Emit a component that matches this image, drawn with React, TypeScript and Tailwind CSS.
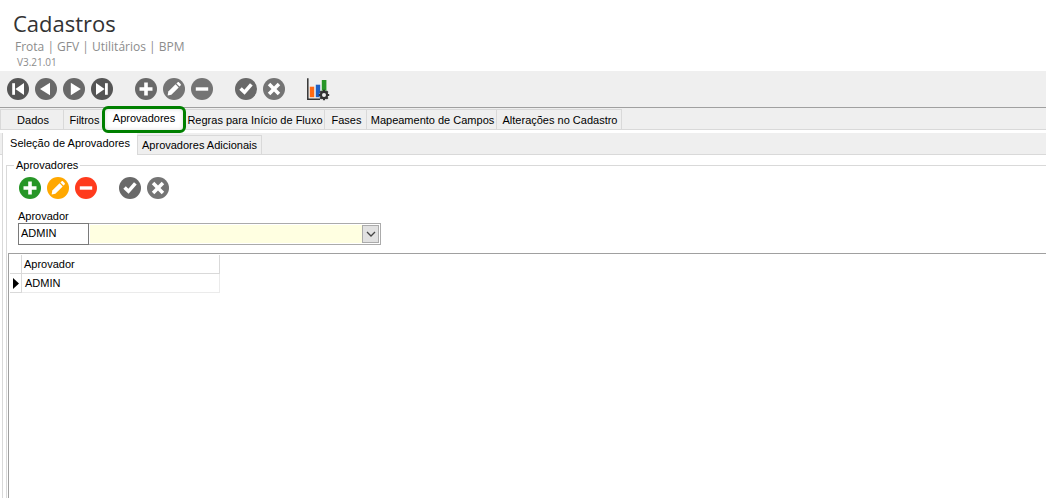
import React from "react";
import clsx from "clsx";

type IconName =
  | "first"
  | "prev"
  | "next"
  | "last"
  | "add"
  | "edit"
  | "remove"
  | "confirm"
  | "cancel";

interface ToolButtonProps {
  icon: IconName;
  label: string;
  color?: string;
}

const glyphs: Record<IconName, React.ReactNode> = {
  first: (
    <>
      <path d="M5.2 5.2h2.8v11.6H5.2z" />
      <path d="M17 5v12L8.4 11z" />
    </>
  ),
  prev: <path d="M15 4.8v12.4L5 11z" />,
  next: <path d="M7.8 4.8v12.4L17.8 11z" />,
  last: (
    <>
      <path d="M14 5.2h2.8v11.6H14z" />
      <path d="M5 5v12l8.6-6z" />
    </>
  ),
  add: <path d="M9.2 4.5h3.6v4.7h4.7v3.6h-4.7v4.7H9.2v-4.7H4.5V9.2h4.7z" />,
  edit: (
    <>
      <path d="M4.6 17.4l.7-3.8 7.3-7.3 3.1 3.1-7.3 7.3z" />
      <path d="M13.4 5.5l1.1-1.1c.5-.5 1.1-.5 1.6 0l1.5 1.5c.5.5.5 1.1 0 1.6l-1.1 1.1z" />
    </>
  ),
  remove: <path d="M4.8 9.3h12.4v3.4H4.8z" />,
  confirm: <path d="M4.3 11.7l2.5-2.5 2.6 2.5 5.6-6.4 2.7 2.3-8.1 9.2z" />,
  cancel: (
    <path d="M7.3 4.8L11 8.5l3.7-3.7 2.5 2.5-3.7 3.7 3.7 3.7-2.5 2.5-3.7-3.7-3.7 3.7-2.5-2.5L8.5 11 4.8 7.3z" />
  ),
};

const ToolButton: React.FC<ToolButtonProps> = ({
  icon,
  label,
  color = "text-[#696969]",
}) => (
  <button type="button" aria-label={label} className={clsx("size-[22px]", color)}>
    <svg viewBox="0 0 22 22" className="block size-full">
      <circle cx="11" cy="11" r="11" fill="currentColor" />
      <g fill="#fff">{glyphs[icon]}</g>
    </svg>
  </button>
);

const ChartIcon = () => (
  <svg viewBox="0 0 24 24" className="block size-6">
    <path d="M0.8 0.3v20.9H13" fill="none" stroke="#333" strokeWidth="1.5" />
    <path d="M2.8 8.7h4.4v10.5H2.8z" fill="#ff6a13" />
    <path d="M8.8 6.7h4.4v12.5H8.8z" fill="#1f61c4" />
    <path d="M14.8 2h4.6v12h-4.6z" fill="#279627" />
    <circle cx="17" cy="17" r="4.6" fill="#efefef" />
    <path
      d="M17 11.8v10.4M11.8 17h10.4M13.3 13.3l7.4 7.4M20.7 13.3l-7.4 7.4"
      stroke="#333"
      strokeWidth="2.2"
    />
    <circle cx="17" cy="17" r="3.1" fill="#efefef" stroke="#333" strokeWidth="2.2" />
  </svg>
);

const mainTabs = [
  { label: "Dados", width: "w-16" },
  { label: "Filtros", width: "w-10" },
  { label: "Aprovadores", width: "w-20" },
  { label: "Regras para Início de Fluxo", width: "w-[141px]" },
  { label: "Fases", width: "w-[42px]" },
  { label: "Mapeamento de Campos", width: "w-[130px]" },
  { label: "Alterações no Cadastro", width: "w-[125px]" },
];

const Header = () => (
  <header className="h-[71px] pt-2 font-['Open_Sans',sans-serif]">
    <h1 className="pl-[13px] text-[22px] leading-[30px] text-[#333]">Cadastros</h1>
    <p className="pl-[15px] text-[12px] leading-[18px] text-[#8c8c8c]">
      Frota | GFV | Utilitários | BPM
    </p>
    <p className="pl-[17px] text-[10px] leading-[13px] text-[#8c8c8c]">V3.21.01</p>
  </header>
);

const Toolbar = () => (
  <div
    role="toolbar"
    className="flex h-[37px] items-start gap-[22px] border-b border-[#a0a0a0] bg-[#efefef] pl-[7px] pt-[7px]"
  >
    <div className="flex gap-1.5">
      <ToolButton icon="first" label="Primeiro" color="text-[#555]" />
      <ToolButton icon="prev" label="Anterior" />
      <ToolButton icon="next" label="Próximo" />
      <ToolButton icon="last" label="Último" color="text-[#555]" />
    </div>
    <div className="flex gap-1.5">
      <ToolButton icon="add" label="Incluir" />
      <ToolButton icon="edit" label="Editar" color="text-[#747474]" />
      <ToolButton icon="remove" label="Excluir" color="text-[#747474]" />
    </div>
    <div className="flex gap-1.5">
      <ToolButton icon="confirm" label="Confirmar" />
      <ToolButton icon="cancel" label="Cancelar" color="text-[#747474]" />
    </div>
    <button type="button" aria-label="Relatórios">
      <ChartIcon />
    </button>
  </div>
);

const MainTabs = () => (
  <div
    role="tablist"
    className="flex h-[22px] items-end border-b border-[#d9d9d9] bg-[#efefef]"
  >
    {mainTabs.map(({ label, width }) =>
      label === "Aprovadores" ? (
        <div key={label} className={clsx("relative h-5 shrink-0", width)}>
          <button
            type="button"
            role="tab"
            aria-selected="true"
            className="absolute -inset-x-0.5 -top-[3px] z-10 h-[27px] whitespace-nowrap rounded-md border-3 border-[#008000] bg-white pb-0.5 shadow-[inset_0_0_4px_#ddd]"
          >
            {label}
          </button>
        </div>
      ) : (
        <button
          key={label}
          type="button"
          role="tab"
          aria-selected="false"
          className={clsx(
            "h-5 shrink-0 whitespace-nowrap border-r border-t border-[#d9d9d9] pl-0.5 pt-0.5 first:border-l",
            width,
          )}
        >
          {label}
        </button>
      ),
    )}
  </div>
);

const SubTabs = () => (
  <div
    role="tablist"
    className="mt-[3px] flex h-[22px] items-end border-b border-[#d9d9d9] bg-[#efefef] pl-0.5"
  >
    <button
      type="button"
      role="tab"
      aria-selected="true"
      className="-mb-px h-[22px] w-[135px] shrink-0 whitespace-nowrap border-l border-[#d9d9d9] bg-white pb-0.5"
    >
      Seleção de Aprovadores
    </button>
    <button
      type="button"
      role="tab"
      aria-selected="false"
      className="h-[19px] w-[125px] shrink-0 whitespace-nowrap border-x border-t border-[#d9d9d9]"
    >
      Aprovadores Adicionais
    </button>
  </div>
);

const ApproverField = () => (
  <div className="pl-[11px] pt-[11px]">
    <label htmlFor="aprovador" className="block h-[13px] leading-[13px]">
      Aprovador
    </label>
    <div className="flex h-[22px]">
      <input
        id="aprovador"
        type="text"
        defaultValue="ADMIN"
        className="w-[71px] border border-[#7a7a7a] bg-white pb-0.5 pl-0.5 outline-none"
      />
      <div className="relative w-[292px] border border-l-0 border-[#ababab] p-px">
        <select
          aria-label="Nome do aprovador"
          className="block size-full appearance-none bg-[#ffffe1] outline-none"
        >
          <option></option>
        </select>
        <span className="pointer-events-none absolute right-px top-px flex h-[18px] w-[17px] items-center justify-center border border-[#ababab] bg-[#e1e1e1]">
          <svg viewBox="0 0 10 6" className="h-1.5 w-2.5">
            <path d="M1 1l4 4 4-4" fill="none" stroke="#444" strokeWidth="1.3" />
          </svg>
        </span>
      </div>
    </div>
  </div>
);

const ApproverGrid = () => (
  <div className="ml-px mt-2 flex-1 border-l border-t border-[#a0a0a0] pl-px pt-px">
    <table className="table-fixed border-separate border-spacing-0 text-left">
      <thead>
        <tr className="h-[19px]">
          <th className="w-3 border-b border-r border-[#d9d9d9] p-0"></th>
          <th className="w-[198px] border-b border-r border-[#d9d9d9] p-0 pl-0.5 font-normal">
            Aprovador
          </th>
        </tr>
      </thead>
      <tbody>
        <tr className="h-[19px]">
          <td className="border-b border-r border-[#d9d9d9] p-0 pl-[3px]">
            <svg viewBox="0 0 6 11" className="block h-[11px] w-1.5">
              <path d="M0 0v11l6-5.5z" fill="#000" />
            </svg>
          </td>
          <td className="border-b border-r border-[#ebebeb] p-0 pl-[3px]">ADMIN</td>
        </tr>
      </tbody>
    </table>
  </div>
);

const App: React.FC = () => {
  return (
    <div className="flex min-h-screen flex-col overflow-hidden bg-white font-['Liberation_Sans',Arial,sans-serif] text-[11px] leading-[13px] text-black">
      <Header />
      <Toolbar />
      <MainTabs />
      <SubTabs />
      <main className="ml-0.5 flex flex-1 flex-col border-l border-[#d9d9d9] pl-[3px] pt-2.5">
        <section
          aria-labelledby="grupo-aprovadores"
          className="flex flex-1 flex-col border-l border-t border-[#d9d9d9]"
        >
          <h2
            id="grupo-aprovadores"
            className="-mt-[7px] ml-[7px] self-start bg-white px-0.5"
          >
            Aprovadores
          </h2>
          <div className="flex gap-[22px] pl-3 pt-[5px]">
            <div className="flex gap-1.5">
              <ToolButton icon="add" label="Incluir aprovador" color="text-[#279627]" />
              <ToolButton icon="edit" label="Editar aprovador" color="text-[#ffa800]" />
              <ToolButton icon="remove" label="Excluir aprovador" color="text-[#ff3b1d]" />
            </div>
            <div className="flex gap-1.5">
              <ToolButton icon="confirm" label="Confirmar aprovador" />
              <ToolButton icon="cancel" label="Cancelar aprovador" color="text-[#747474]" />
            </div>
          </div>
          <ApproverField />
          <ApproverGrid />
        </section>
      </main>
    </div>
  );
};

export default App;
